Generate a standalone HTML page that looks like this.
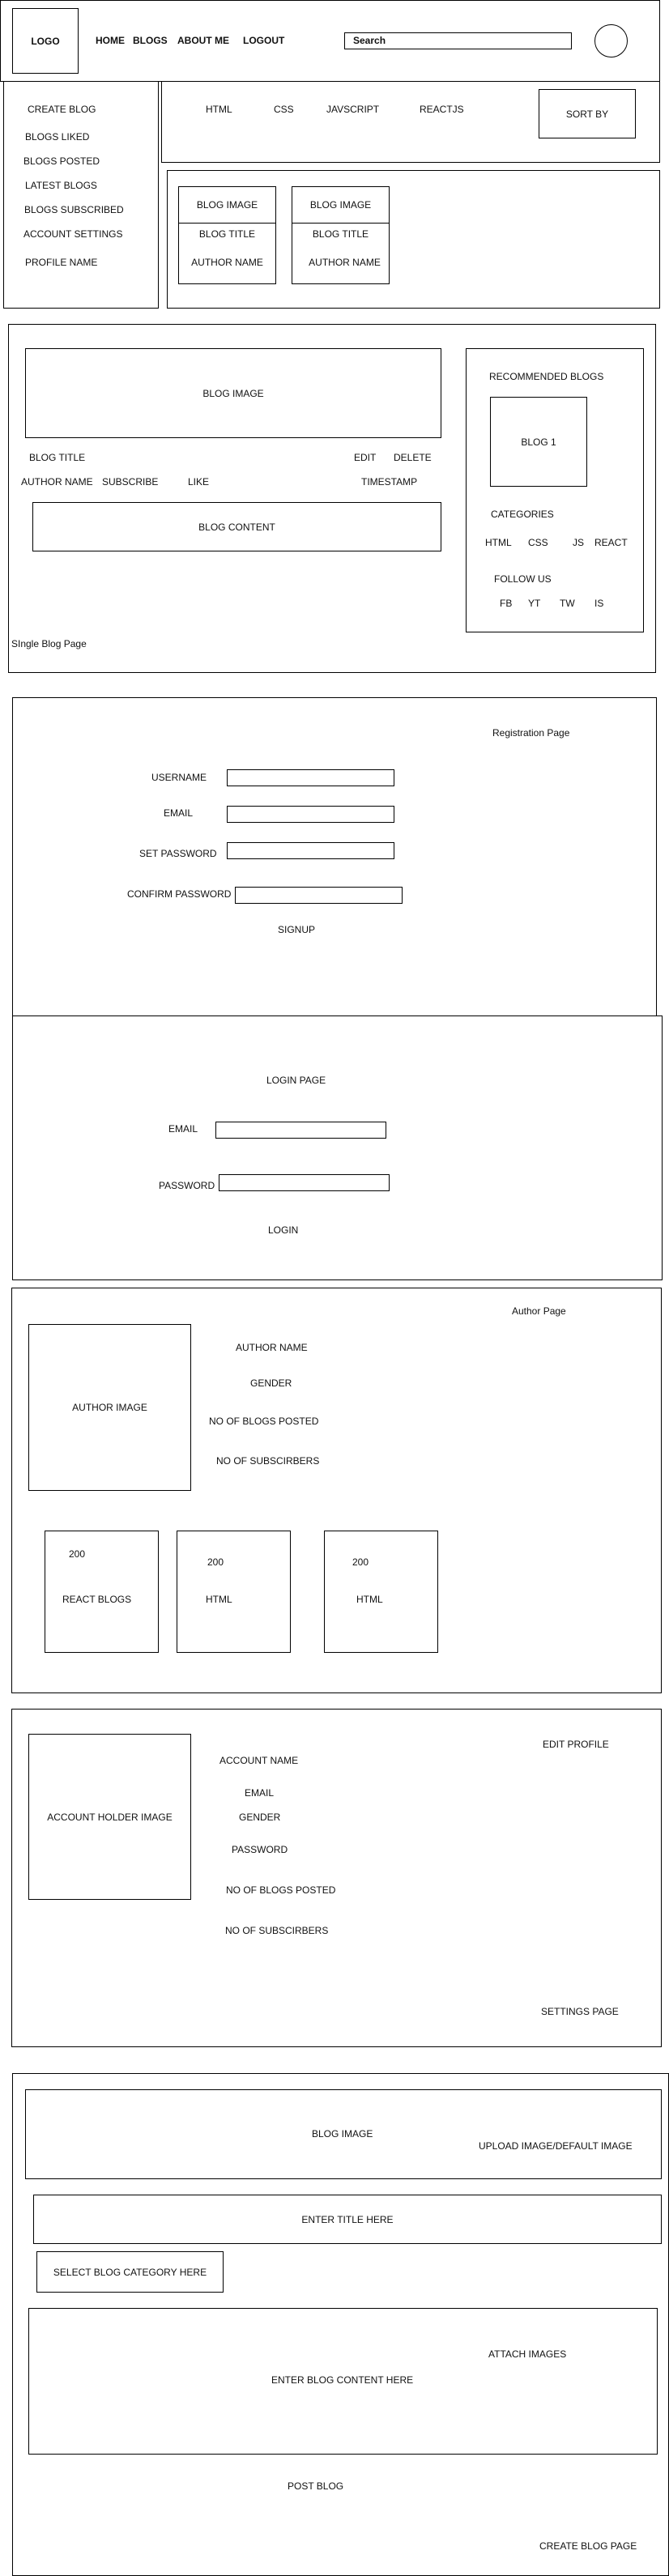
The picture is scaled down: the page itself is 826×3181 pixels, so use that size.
<!DOCTYPE html>
<html><head><meta charset="utf-8"><style>
*{margin:0;padding:0;box-sizing:border-box}
body{width:826px;height:3181px;position:relative;background:#fff;font-family:"Liberation Sans",Arial,sans-serif;font-size:12px;color:#111;overflow:hidden}
.b{position:absolute;border:1px solid #000;background:transparent}
.w{background:#fff}
.c{display:flex;align-items:center;justify-content:center;text-align:center}
.t{position:absolute;line-height:14px;white-space:nowrap}
.bd{font-weight:bold}
</style></head><body>
<!-- header -->
<div class="b" style="left:0;top:0;width:815px;height:101px"></div>
<div class="b c bd" style="left:15px;top:10px;width:82px;height:81px">LOGO</div>
<div class="t bd" style="left:118px;top:43px">HOME</div>
<div class="t bd" style="left:164px;top:43px">BLOGS</div>
<div class="t bd" style="left:219px;top:43px">ABOUT ME</div>
<div class="t bd" style="left:300px;top:43px">LOGOUT</div>
<div class="b bd" style="left:425px;top:40px;width:281px;height:21px;padding-left:10px;line-height:19px">Search</div>
<div class="b" style="left:734px;top:30px;width:41px;height:41px;border-radius:50%"></div>
<!-- sidebar -->
<div class="b" style="left:4px;top:100px;width:192px;height:281px"></div>
<div class="t" style="left:34px;top:128px">CREATE BLOG</div>
<div class="t" style="left:31px;top:162px">BLOGS LIKED</div>
<div class="t" style="left:29px;top:192px">BLOGS POSTED</div>
<div class="t" style="left:31px;top:222px">LATEST BLOGS</div>
<div class="t" style="left:30px;top:252px">BLOGS SUBSCRIBED</div>
<div class="t" style="left:29px;top:282px">ACCOUNT SETTINGS</div>
<div class="t" style="left:31px;top:317px">PROFILE NAME</div>
<div class="b" style="left:199px;top:100px;width:616px;height:101px"></div>
<div class="t" style="left:254px;top:128px">HTML</div>
<div class="t" style="left:338px;top:128px">CSS</div>
<div class="t" style="left:403px;top:128px">JAVSCRIPT</div>
<div class="t" style="left:518px;top:128px">REACTJS</div>
<div class="b c" style="left:665px;top:110px;width:120px;height:61px">SORT BY</div>
<div class="b" style="left:206px;top:210px;width:609px;height:171px"></div>
<div class="b" style="left:220px;top:230px;width:121px;height:121px"></div>
<div class="b" style="left:220px;top:275px;width:121px;height:1px;border-width:1px 0 0 0"></div>
<div class="t" style="left:220px;width:121px;text-align:center;top:246px">BLOG IMAGE</div>
<div class="t" style="left:220px;width:121px;text-align:center;top:282px">BLOG TITLE</div>
<div class="t" style="left:220px;width:121px;text-align:center;top:317px">AUTHOR NAME</div>
<div class="b" style="left:360px;top:230px;width:121px;height:121px"></div>
<div class="b" style="left:360px;top:275px;width:121px;height:1px;border-width:1px 0 0 0"></div>
<div class="t" style="left:360px;width:121px;text-align:center;top:246px">BLOG IMAGE</div>
<div class="t" style="left:360px;width:121px;text-align:center;top:282px">BLOG TITLE</div>
<div class="t" style="left:365px;width:121px;text-align:center;top:317px">AUTHOR NAME</div>
<!-- single blog -->
<div class="b" style="left:10px;top:400px;width:800px;height:431px"></div>
<div class="b c" style="left:31px;top:430px;width:514px;height:111px">BLOG IMAGE</div>
<div class="t" style="left:36px;top:558px">BLOG TITLE</div>
<div class="t" style="left:437px;top:558px">EDIT</div>
<div class="t" style="left:486px;top:558px">DELETE</div>
<div class="t" style="left:26px;top:588px">AUTHOR NAME</div>
<div class="t" style="left:126px;top:588px">SUBSCRIBE</div>
<div class="t" style="left:232px;top:588px">LIKE</div>
<div class="t" style="left:446px;top:588px">TIMESTAMP</div>
<div class="b c" style="left:40px;top:620px;width:505px;height:61px">BLOG CONTENT</div>
<div class="b" style="left:575px;top:430px;width:220px;height:351px"></div>
<div class="t" style="left:604px;top:458px">RECOMMENDED BLOGS</div>
<div class="b c" style="left:605px;top:490px;width:120px;height:111px">BLOG 1</div>
<div class="t" style="left:606px;top:628px">CATEGORIES</div>
<div class="t" style="left:599px;top:663px">HTML</div>
<div class="t" style="left:652px;top:663px">CSS</div>
<div class="t" style="left:707px;top:663px">JS</div>
<div class="t" style="left:734px;top:663px">REACT</div>
<div class="t" style="left:610px;top:708px">FOLLOW US</div>
<div class="t" style="left:617px;top:738px">FB</div>
<div class="t" style="left:652px;top:738px">YT</div>
<div class="t" style="left:691px;top:738px">TW</div>
<div class="t" style="left:734px;top:738px">IS</div>
<div class="t" style="left:14px;top:788px">SIngle Blog Page</div>
<!-- registration -->
<div class="b" style="left:15px;top:861px;width:796px;height:410px"></div>
<div class="t" style="left:608px;top:898px">Registration Page</div>
<div class="t" style="left:187px;top:953px">USERNAME</div>
<div class="b" style="left:280px;top:950px;width:207px;height:21px"></div>
<div class="t" style="left:202px;top:997px">EMAIL</div>
<div class="b" style="left:280px;top:995px;width:207px;height:21px"></div>
<div class="t" style="left:172px;top:1047px">SET PASSWORD</div>
<div class="b" style="left:280px;top:1040px;width:207px;height:21px"></div>
<div class="t" style="left:157px;top:1097px">CONFIRM PASSWORD</div>
<div class="b" style="left:290px;top:1095px;width:207px;height:21px"></div>
<div class="t" style="left:343px;top:1141px">SIGNUP</div>
<!-- login -->
<div class="b w" style="left:15px;top:1254px;width:803px;height:327px"></div>
<div class="t" style="left:329px;top:1327px">LOGIN PAGE</div>
<div class="t" style="left:208px;top:1387px">EMAIL</div>
<div class="b" style="left:266px;top:1385px;width:211px;height:21px"></div>
<div class="t" style="left:196px;top:1457px">PASSWORD</div>
<div class="b" style="left:270px;top:1450px;width:211px;height:21px"></div>
<div class="t" style="left:331px;top:1512px">LOGIN</div>
<!-- author -->
<div class="b" style="left:14px;top:1590px;width:803px;height:501px"></div>
<div class="t" style="left:632px;top:1612px">Author Page</div>
<div class="b c" style="left:35px;top:1635px;width:201px;height:206px">AUTHOR IMAGE</div>
<div class="t" style="left:291px;top:1657px">AUTHOR NAME</div>
<div class="t" style="left:309px;top:1701px">GENDER</div>
<div class="t" style="left:258px;top:1748px">NO OF BLOGS POSTED</div>
<div class="t" style="left:267px;top:1797px">NO OF SUBSCIRBERS</div>
<div class="b" style="left:55px;top:1890px;width:141px;height:151px"></div>
<div class="t" style="left:85px;top:1912px">200</div>
<div class="t" style="left:77px;top:1968px">REACT BLOGS</div>
<div class="b" style="left:218px;top:1890px;width:141px;height:151px"></div>
<div class="t" style="left:256px;top:1922px">200</div>
<div class="t" style="left:254px;top:1968px">HTML</div>
<div class="b" style="left:400px;top:1890px;width:141px;height:151px"></div>
<div class="t" style="left:435px;top:1922px">200</div>
<div class="t" style="left:440px;top:1968px">HTML</div>
<!-- settings -->
<div class="b" style="left:14px;top:2110px;width:803px;height:418px"></div>
<div class="b c" style="left:35px;top:2141px;width:201px;height:205px">ACCOUNT HOLDER IMAGE</div>
<div class="t" style="left:670px;top:2147px">EDIT PROFILE</div>
<div class="t" style="left:271px;top:2167px">ACCOUNT NAME</div>
<div class="t" style="left:302px;top:2207px">EMAIL</div>
<div class="t" style="left:295px;top:2237px">GENDER</div>
<div class="t" style="left:286px;top:2277px">PASSWORD</div>
<div class="t" style="left:279px;top:2327px">NO OF BLOGS POSTED</div>
<div class="t" style="left:278px;top:2377px">NO OF SUBSCIRBERS</div>
<div class="t" style="left:668px;top:2477px">SETTINGS PAGE</div>
<!-- create blog -->
<div class="b" style="left:15px;top:2560px;width:811px;height:621px"></div>
<div class="b" style="left:31px;top:2580px;width:786px;height:111px"></div>
<div class="t" style="left:385px;top:2628px">BLOG IMAGE</div>
<div class="t" style="left:591px;top:2643px">UPLOAD IMAGE/DEFAULT IMAGE</div>
<div class="b c" style="left:41px;top:2710px;width:776px;height:61px">ENTER TITLE HERE</div>
<div class="b c" style="left:45px;top:2780px;width:231px;height:51px">SELECT BLOG CATEGORY HERE</div>
<div class="b" style="left:35px;top:2850px;width:777px;height:181px"></div>
<div class="t" style="left:603px;top:2900px">ATTACH IMAGES</div>
<div class="t" style="left:335px;top:2932px">ENTER BLOG CONTENT HERE</div>
<div class="t" style="left:355px;top:3063px">POST BLOG</div>
<div class="t" style="left:666px;top:3137px">CREATE BLOG PAGE</div>
</body></html>
